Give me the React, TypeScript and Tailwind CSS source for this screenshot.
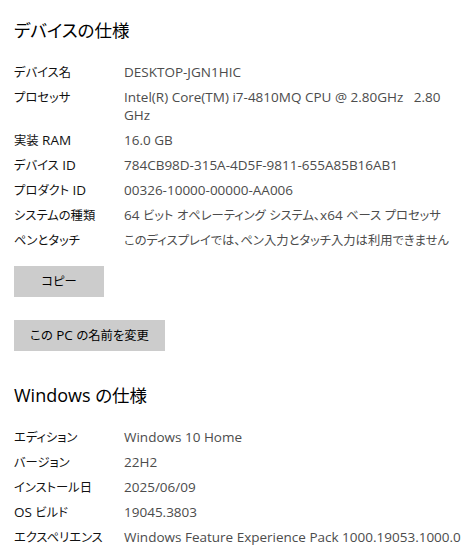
import React from 'react';

const FONT = "'Open Sans', 'Noto Sans CJK JP', sans-serif";

// Japanese runs sit a bit smaller than the Latin text, like Yu Gothic UI next to Segoe UI
const CJK_RUN = /([\u3000-\u30ff\u4e00-\u9fff\uff00-\uffef]+)/;

function Jp({ text, cjkClass = 'text-[12.3px]' }: { text: string; cjkClass?: string }) {
  const parts = text.split(CJK_RUN);
  return (
    <>
      {parts.map((part, i) =>
        i % 2 === 1 ? (
          <span key={i} className={`${cjkClass} leading-none`}>
            {part}
          </span>
        ) : (
          <React.Fragment key={i}>{part}</React.Fragment>
        )
      )}
    </>
  );
}

interface SpecRow {
  label: string;
  value: string;
}

const deviceSpecs: SpecRow[] = [
  { label: 'デバイス名', value: 'DESKTOP-JGN1HIC' },
  { label: 'プロセッサ', value: 'Intel(R) Core(TM) i7-4810MQ CPU @ 2.80GHz\u00a0\u00a0 2.80\nGHz' },
  { label: '実装 RAM', value: '16.0 GB' },
  { label: 'デバイス ID', value: '784CB98D-315A-4D5F-9811-655A85B16AB1' },
  { label: 'プロダクト ID', value: '00326-10000-00000-AA006' },
  { label: 'システムの種類', value: '64 ビット オペレーティング システム、x64 ベース プロセッサ' },
  { label: 'ペンとタッチ', value: 'このディスプレイでは、ペン入力とタッチ入力は利用できません' },
];

const windowsSpecs: SpecRow[] = [
  { label: 'エディション', value: 'Windows 10 Home' },
  { label: 'バージョン', value: '22H2' },
  { label: 'インストール日', value: '2025/06/09' },
  { label: 'OS ビルド', value: '19045.3803' },
  { label: 'エクスペリエンス', value: 'Windows Feature Experience Pack 1000.19053.1000.0' },
];

function SpecTable({ rows }: { rows: SpecRow[] }) {
  return (
    <div className="grid grid-cols-[110px_1fr] gap-y-[7px] text-[13.5px] leading-[18px]">
      {rows.map((row) => (
        <React.Fragment key={row.label}>
          <div className="text-[#111] whitespace-nowrap">
            <Jp text={row.label} />
          </div>
          <div className="text-[#4c4c4c] whitespace-pre">
            <Jp text={row.value} />
          </div>
        </React.Fragment>
      ))}
    </div>
  );
}

export default function App() {
  return (
    <div
      className="w-[475px] h-[547px] overflow-hidden bg-white pl-[14px] pt-[16px] [font-feature-settings:'palt']"
      style={{ fontFamily: FONT }}
    >
      {/* Device specs */}
      <h2 className="text-[18px] leading-[28px] text-black mb-[19px]">
        <Jp text="デバイスの仕様" cjkClass="text-[17.5px]" />
      </h2>
      <SpecTable rows={deviceSpecs} />

      <div className="flex flex-col items-start gap-[23px] mt-[17px]">
        <button className="w-[90px] h-[31px] bg-[#cccccc] text-[13.5px] text-black">
          <Jp text="コピー" />
        </button>
        <button className="w-[151px] h-[31px] bg-[#cccccc] text-[13.5px] text-black">
          <Jp text="この PC の名前を変更" />
        </button>
      </div>

      {/* Windows specs */}
      <h2 className="text-[18px] leading-[28px] text-black mt-[30px] mb-[19px]">
        <Jp text="Windows の仕様" cjkClass="text-[17.5px]" />
      </h2>
      <SpecTable rows={windowsSpecs} />
    </div>
  );
}
